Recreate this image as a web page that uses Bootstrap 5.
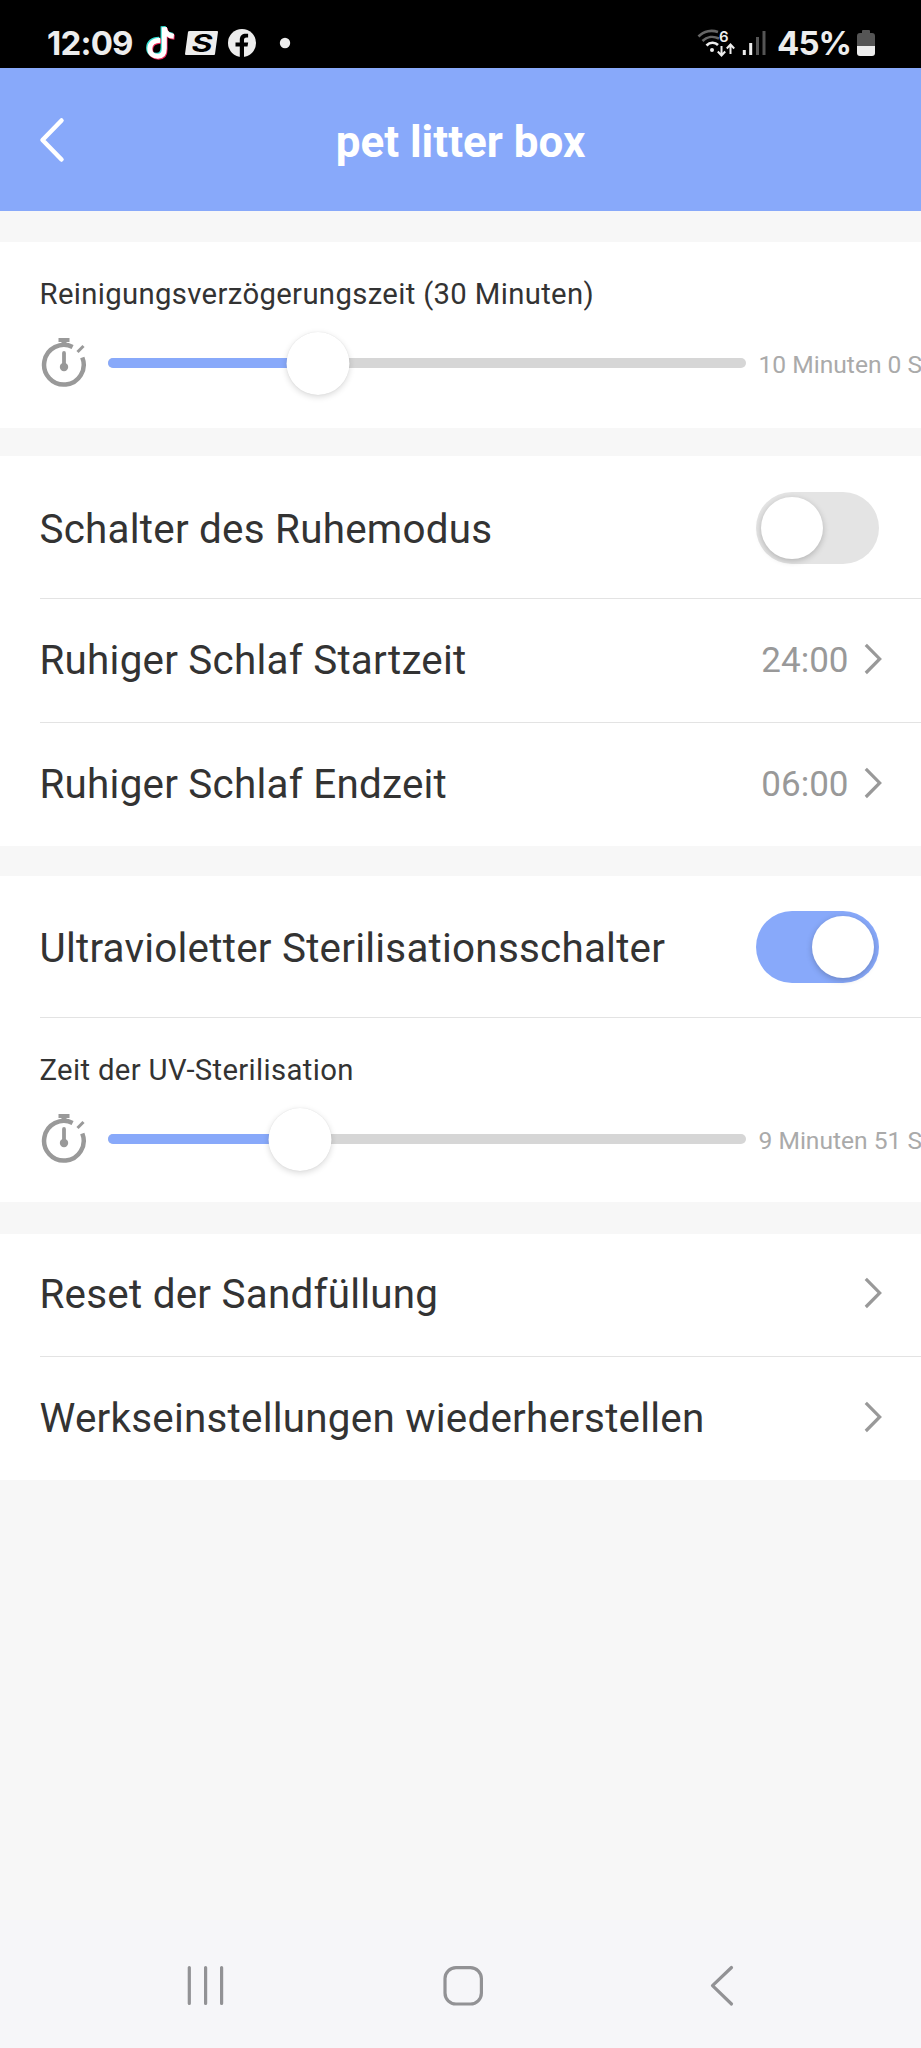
<!DOCTYPE html>
<html lang="de">
<head>
<meta charset="utf-8">
<meta name="viewport" content="width=device-width, initial-scale=1">
<title>pet litter box</title>
<link rel="stylesheet" href="https://cdn.jsdelivr.net/npm/bootstrap@5.3.0/dist/css/bootstrap.min.css">
<style>
  :root { --accent: #88a9fa; --ink: #333; --muted: #999; --page: #f7f7f7; }
  body { font-family: Roboto, sans-serif; color: var(--ink); background: var(--page); overflow: hidden; }
  svg { display: block; flex: none; overflow: visible; }
  .screen { width: 921px; height: 2048px; overflow: hidden; }
  .status-bar { height: 68px; background: #000; color: #ededed; padding: 18px 46px 0 47px; font: 700 33px/50px Inter, sans-serif; }
  .status-time { width: 99px; letter-spacing: -.8px; }
  .status-battery { margin-left: 11px; letter-spacing: -1px; }
  .app-header { height: 143px; background: var(--accent); color: #fff; }
  .app-header h1 { font-size: 44px; font-weight: 700; line-height: 50px; padding-top: 5px; }
  .back-btn { left: 35px; top: 46px; }
  .group { background: #fff; margin-top: 30px; }
  .entry { margin-left: 39.5px; padding-right: 39.5px; height: 124px; font-size: 40.4px; line-height: 48px; letter-spacing: .23px; }
  .entry + .entry, .entry + .slider-block { border-top: 1px solid #e3e3e3; }
  .entry-switch { height: 142px; padding: 6px 42px 0 0; }
  .entry-value { font-size: 35px; letter-spacing: 0; color: var(--muted); margin-right: 15px; }
  .chevron { width: 18px; height: 32px; margin-bottom: 4px; }
  .slider-block { margin-left: 39.5px; height: 186px; padding-top: 35px; }
  .slider-label { font-size: 29.3px; line-height: 34px; letter-spacing: .34px; }
  .slider-row { height: 64px; margin-top: 20px; }
  .track { width: 638px; height: 10.5px; margin-left: 20px; border-radius: 6px; background: #d6d6d6; }
  .track-fill { background: var(--accent); border-radius: 6px 0 0 6px; }
  .knob { width: 63px; height: 63px; border-radius: 50%; background: #fff; }
  .track .knob { top: -26px; transform: translateX(-50%); box-shadow: 0 2px 6px rgba(0,0,0,.15), 0 0 1px rgba(0,0,0,.12); }
  .slider-value { font-size: 24.6px; color: #aaa; margin-left: 13px; padding-top: 4px; }
  .toggle { width: 123px; height: 72px; padding: 5px; border-radius: 36px; background: #e4e4e4; margin-top: -4px; }
  .toggle.on { background: var(--accent); }
  .toggle .knob { width: 62px; height: 62px; box-shadow: 0 2px 6px rgba(0,0,0,.22); }
  .group-uv .entry-switch { height: 141px; padding-top: 5px; }
  .group-uv .slider-block { height: 185px; }
  .group-reset { margin-top: 32px; }
  .group-reset .entry:first-child { height: 122px; padding-bottom: 1px; }
  .nav-bar { height: 128px; background: #f6f6f9; }
</style>
</head>
<body>
<svg width="0" height="0" class="position-absolute" aria-hidden="true">
  <symbol id="chevron" viewBox="0 0 18 32"><path d="M1.800 1.800 15.700 16 1.800 30" fill="none" stroke="#999" stroke-width="3.200"/></symbol>
  <symbol id="timer" viewBox="0 0 48 52">
    <g fill="none" stroke="#999">
      <path d="M32.600 10A19.800 19.800 0 1 0 42.300 20.500" stroke-width="4.500"/>
      <path d="M18.500 3h11" stroke-width="4"/><path d="M24 3v6" stroke-width="5"/>
      <path d="M37.500 15l6-6" stroke-width="3"/>
      <path d="M24 16v14" stroke-width="3.800" stroke-linecap="round"/>
    </g>
    <circle cx="24" cy="30" r="4.200" fill="#999"/>
  </symbol>
</svg>

<div class="screen d-flex flex-column">
  <div class="status-bar d-flex align-items-center">
    <span class="status-time">12:09</span>
    <svg width="30" height="36" viewBox="0 0 30 36">
      <g fill="none" stroke-width="5">
        <path d="M14 15C7 15 3.500 18.500 3.500 23.500S7 31 11.500 31 18 28 18 23V2C18.500 7.500 22 10.500 27.500 11" stroke="#35e0d4" transform="translate(-.9 -.7)"/>
        <path d="M14 15C7 15 3.500 18.500 3.500 23.500S7 31 11.500 31 18 28 18 23V2C18.500 7.500 22 10.500 27.500 11" stroke="#f0285a" transform="translate(1.100 1.200)"/>
        <path d="M14 15C7 15 3.500 18.500 3.500 23.500S7 31 11.500 31 18 28 18 23V2C18.500 7.500 22 10.500 27.500 11" stroke="#fff" transform="translate(.3 .3)"/>
      </g>
    </svg>
    <svg style="margin-left:9px" width="34" height="26" viewBox="0 0 34 26">
      <path d="M5 1h27q1.200 0 1 1l-3 22q0 1-1 1H1q-1 0-1-1L3 2q0-1 2-1z" fill="#ededed"/>
      <text x="17" y="21.500" text-anchor="middle" textLength="21" lengthAdjust="spacingAndGlyphs" font-family="Inter, sans-serif" font-size="24" font-weight="700" font-style="italic" fill="#000">S</text>
    </svg>
    <svg width="28" height="28" viewBox="0 0 28 28" style="margin-left:9px">
      <circle cx="14" cy="14" r="14" fill="#ededed"/>
      <path d="M11.800 28.500V17.500H7.500v-4h4.300V11c0-4.300 2.500-6.200 6-6.200h2.300v3.800h-1.500c-2 0-2.600 1-2.600 2.500v2.400h4.200l-.7 4H16v11z" fill="#000"/>
    </svg>
    <svg width="12" height="12" viewBox="0 0 12 12" style="margin-left:23px"><circle cx="6" cy="6" r="5.200" fill="#ededed"/></svg>
    <svg class="ms-auto" width="38" height="30" viewBox="0 0 38 30">
      <g fill="none" stroke-width="2.600">
        <path d="M1.500 8.500C7 2.500 15 1.800 21 4" stroke="#666"/>
        <path d="M5.500 13C10 8.500 16.500 8 22 10.500" stroke="#666"/>
        <path d="M9.500 17.500C13 14 18 14 21 17" stroke="#eee"/>
        <path d="M24.500 18v9M20.800 23.500l3.700 4 3.700-4M33.500 26v-9M29.800 20.500l3.700-4 3.700 4" stroke="#eee" stroke-width="2"/>
      </g>
      <circle cx="15" cy="22" r="2" fill="#eee"/>
      <text x="22" y="13.500" font-family="Inter, sans-serif" font-size="15" font-weight="600" letter-spacing="0" fill="#eee">6</text>
    </svg>
    <svg width="24" height="26" viewBox="0 0 24 26" style="margin-left:7px">
      <path d="M2.300 20v5M8.700 13v12" stroke="#eee" stroke-width="3"/><path d="M15.500 7v18M22 1v24" stroke="#555" stroke-width="3"/>
    </svg>
    <span class="status-battery">45%</span>
    <svg width="18" height="26" viewBox="0 0 18 26" style="margin-left:6px">
      <path d="M5 3V1q0-1 1-1h6q1 0 1 1v2h2q3 0 3 3v10H0V6q0-3 3-3z" fill="#555"/>
      <path d="M0 16h18v7q0 3-3 3H3q-3 0-3-3z" fill="#ededed"/>
    </svg>
  </div>

  <header class="app-header position-relative d-flex align-items-center justify-content-center">
    <svg class="back-btn position-absolute" width="32" height="52" viewBox="0 0 32 52"><path d="M26.500 6.500 7.500 26l19 19.500" fill="none" stroke="#fff" stroke-width="4.500" stroke-linecap="round" stroke-linejoin="round"/></svg>
    <h1 class="m-0">pet litter box</h1>
  </header>

  <section class="group" style="margin-top:31px">
    <div class="slider-block">
      <div class="slider-label">Reinigungsverzögerungszeit (30 Minuten)</div>
      <div class="slider-row d-flex align-items-center">
        <svg width="48" height="52"><use href="#timer"/></svg>
        <div class="track position-relative flex-shrink-0"><div class="track-fill h-100" style="width:33%"></div><div class="knob position-absolute" style="left:33%"></div></div>
        <div class="slider-value text-nowrap">10 Minuten 0 S</div>
      </div>
    </div>
  </section>

  <section class="group" style="margin-top:28px">
    <div class="entry entry-switch d-flex align-items-center justify-content-between">Schalter des Ruhemodus
      <div class="toggle d-flex"><div class="knob"></div></div></div>
    <div class="entry d-flex align-items-center"><span class="me-auto">Ruhiger Schlaf Startzeit</span><span class="entry-value">24:00</span><svg class="chevron"><use href="#chevron"/></svg></div>
    <div class="entry d-flex align-items-center"><span class="me-auto">Ruhiger Schlaf Endzeit</span><span class="entry-value">06:00</span><svg class="chevron"><use href="#chevron"/></svg></div>
  </section>

  <section class="group group-uv">
    <div class="entry entry-switch d-flex align-items-center justify-content-between">Ultravioletter Sterilisationsschalter
      <div class="toggle on d-flex justify-content-end"><div class="knob"></div></div></div>
    <div class="slider-block">
      <div class="slider-label">Zeit der UV-Sterilisation</div>
      <div class="slider-row d-flex align-items-center">
        <svg width="48" height="52"><use href="#timer"/></svg>
        <div class="track position-relative flex-shrink-0"><div class="track-fill h-100" style="width:30.200%"></div><div class="knob position-absolute" style="left:30.200%"></div></div>
        <div class="slider-value text-nowrap">9 Minuten 51 S</div>
      </div>
    </div>
  </section>

  <section class="group group-reset">
    <div class="entry d-flex align-items-center"><span class="me-auto">Reset der Sandfüllung</span><svg class="chevron"><use href="#chevron"/></svg></div>
    <div class="entry d-flex align-items-center"><span class="me-auto">Werkseinstellungen wiederherstellen</span><svg class="chevron"><use href="#chevron"/></svg></div>
  </section>

  <nav class="nav-bar mt-auto d-flex align-items-center">
    <svg width="921" height="128" viewBox="0 0 921 128">
      <g fill="none" stroke="#929295" stroke-width="3.200" stroke-linecap="round" stroke-linejoin="round">
        <path d="M189.300 47.500v36M205.600 47.500v36M221.600 47.500v36"/>
        <rect x="445" y="47.600" width="36.400" height="36.400" rx="11"/>
        <path d="M731.500 47.500 712.500 65.700l19 18.300"/>
      </g>
    </svg>
  </nav>
</div>
<script src="https://cdn.jsdelivr.net/npm/bootstrap@5.3.0/dist/js/bootstrap.bundle.min.js"></script>
</body>
</html>
